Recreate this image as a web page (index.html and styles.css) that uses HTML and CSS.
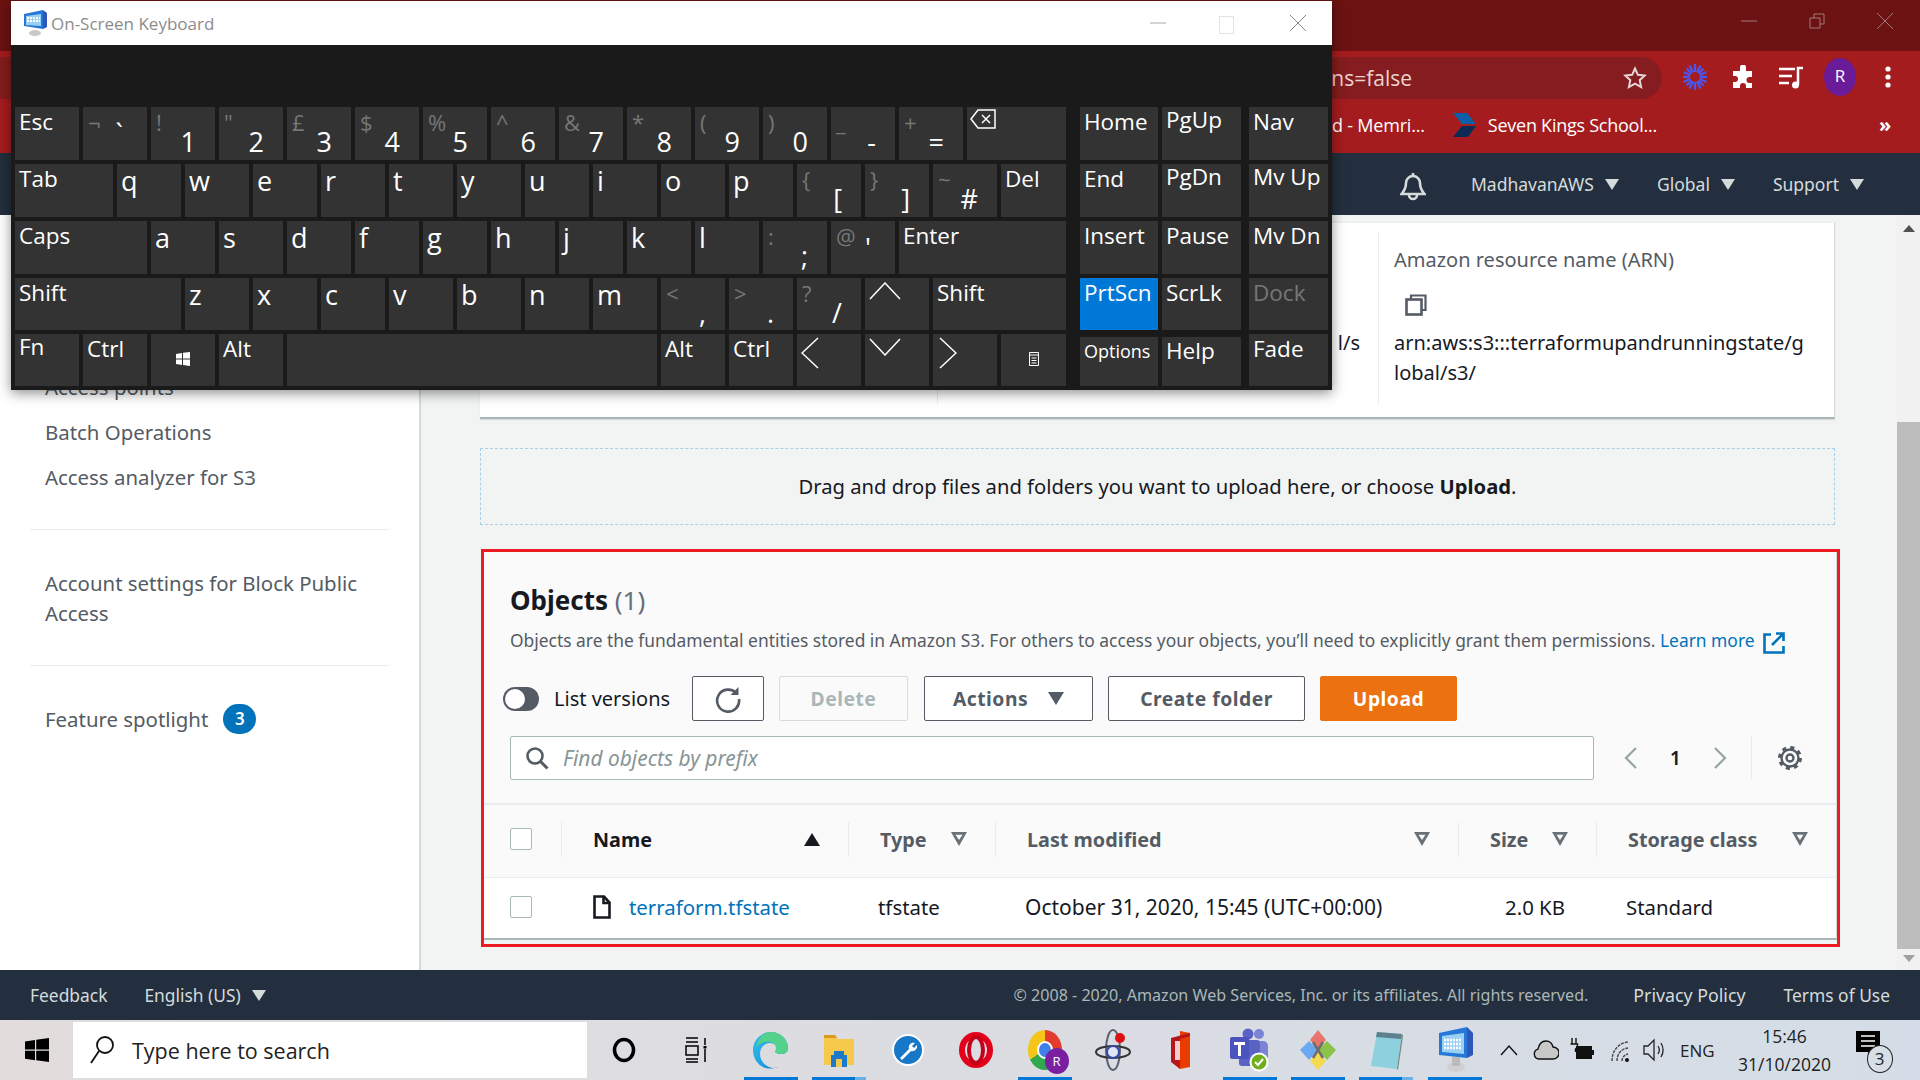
FILE: index.html
```html
<!DOCTYPE html>
<html lang="en">
<head>
<meta charset="utf-8">
<title>S3 bucket</title>
<link rel="stylesheet" href="styles.css">
</head>
<body>
<div class="screen">
  <div class="chrome-title">
    <svg class="cc" width="18" height="18" viewBox="0 0 18 18"><path d="M1 9h16" stroke="#a07a7a" fill="none"/></svg>
    <svg class="cc" width="18" height="18" viewBox="0 0 18 18"><path d="M2 6h10v10H2zM6 6V2h10v10h-4" stroke="#a07a7a" fill="none"/></svg>
    <svg class="cc" width="18" height="18" viewBox="0 0 18 18"><path d="M1 1l16 16M17 1L1 17" stroke="#a07a7a" fill="none"/></svg>
  </div>
  <div class="chrome-tool">
    <div class="omni"><span class="url">ns=false</span>
      <svg width="24" height="24" viewBox="0 0 24 24"><path d="M12 2.500l2.900 6.300 6.800.8-5 4.600 1.400 6.800-6.100-3.400-6.100 3.400 1.400-6.800-5-4.600 6.800-.8z" fill="none" stroke="#e6d5d5" stroke-width="2"/></svg>
    </div>
    <svg class="ext e1" width="26" height="28" viewBox="0 0 26 28"><g stroke="#4b55e8" stroke-width="2.400"><path d="M13 1v26M1 14h24M4.500 5.500l17 17M21.500 5.500l-17 17M7.500 2.500l11 23M18.500 2.500l-11 23M1.500 9l23 10M24.500 9l-23 10"/></g><circle cx="13" cy="14" r="5" fill="#a51c1f"/></svg>
    <svg class="ext e2" width="24" height="24" viewBox="0 0 24 24"><path d="M9 2.500a3 3 0 0 1 6 0V6h6v6h-2.500a3 3 0 0 0 0 6H21v5h-6v-2a3 3 0 0 0-6 0v2H2v-6h2a3 3 0 0 0 0-6H2V6h7z" fill="#fff"/></svg>
    <svg class="ext e3" width="26" height="24" viewBox="0 0 26 24"><path d="M1 4h16M1 11h13M1 18h10" stroke="#fff" stroke-width="2.400"/><path d="M20 20V3h5" stroke="#fff" stroke-width="2.500" fill="none"/><circle cx="17.500" cy="20" r="3.500" fill="#fff"/></svg>
    <div class="avatar">R</div>
    <svg class="ext e5" width="8" height="24" viewBox="0 0 8 24"><circle cx="4" cy="4" r="2.600" fill="#fff"/><circle cx="4" cy="12" r="2.600" fill="#fff"/><circle cx="4" cy="20" r="2.600" fill="#fff"/></svg>
  </div>
  <div class="chrome-marks">
    <span class="mark m1">d - Memri...</span>
    <svg class="sk" width="24" height="24" viewBox="0 0 24 24"><path d="M0 0h14l9 11H9z" fill="#0a5fa8"/><path d="M9 13h14l-8 11H0z" fill="#0b2b55"/></svg>
    <span class="mark m2">Seven Kings School...</span>
    <span class="more">»</span>
  </div>
  <div class="aws-nav">
    <svg class="bell" width="26" height="30" viewBox="0 0 26 30"><path d="M13 4a7 7 0 0 0-7 7c0 6-2 8-4.500 11h23C22 19 20 17 20 11a7 7 0 0 0-7-7zM13 1v3M9 23a4 4 0 0 0 8 0" fill="none" stroke="#d5dbdb" stroke-width="2.600"/></svg>
    <span class="nv n1">MadhavanAWS</span><i class="tri tri-nav"></i>
    <span class="nv n2">Global</span><i class="tri tri-nav"></i>
    <span class="nv n3">Support</span><i class="tri tri-nav"></i>
  </div>

  <div class="main">
    <nav class="side">
      <a class="side-link">Access points</a>
      <a class="side-link">Batch Operations</a>
      <a class="side-link">Access analyzer for S3</a>
      <hr class="side-rule">
      <a class="side-link wrap">Account settings for Block Public Access</a>
      <hr class="side-rule">
      <a class="side-link spot">Feature spotlight <span class="badge">3</span></a>
    </nav>
    <div class="content">
      <section class="props">
        <div class="pcol pa"></div>
        <div class="pcol pb">l/s</div>
        <div class="pcol pc">
          <div class="plabel">Amazon resource name (ARN)</div>
          <svg class="copy" width="22" height="22" viewBox="0 0 22 22"><path d="M6 5V1.500h14.500V16H17" fill="none" stroke="#545b64" stroke-width="2.200"/><rect x="1.500" y="5.500" width="15" height="15" fill="none" stroke="#545b64" stroke-width="2.600"/></svg>
          <div class="parn">arn:aws:s3:::terraformupandrunningstate/g<br>lobal/s3/</div>
        </div>
      </section>
      <div class="drop">Drag and drop files and folders you want to upload here, or choose <b>Upload</b>.</div>
      <section class="objects">
        <div class="ohead">
          <h2 class="otitle">Objects <span class="ocount">(1)</span></h2>
          <p class="odesc">Objects are the fundamental entities stored in Amazon S3. For others to access your objects, you’ll need to explicitly grant them permissions. <a class="olink">Learn more</a>
            <svg class="ext-link" width="22" height="22" viewBox="0 0 22 22"><path d="M8 2.500H1.500v18h19V14M13 1.500h7.500V9M20 2L9 13" fill="none" stroke="#0073bb" stroke-width="2.600"/></svg></p>
          <div class="actions">
            <span class="toggle"><i class="knob"></i></span>
            <span class="tlabel">List versions</span>
            <button class="btn b-ref"><svg width="28" height="28" viewBox="0 0 28 28"><path d="M22.500 8.500A11 11 0 1 0 25 14" fill="none" stroke="#545b64" stroke-width="2.600"/><path d="M24.500 2v8h-8z" fill="#545b64"/></svg></button>
            <button class="btn b-del">Delete</button>
            <button class="btn b-act">Actions <i class="tri tri-btn"></i></button>
            <button class="btn b-new">Create folder</button>
            <button class="btn b-up">Upload</button>
          </div>
          <div class="finder">
            <div class="search">
              <svg width="24" height="24" viewBox="0 0 24 24"><circle cx="10" cy="10" r="7.500" fill="none" stroke="#545b64" stroke-width="2.600"/><path d="M15.500 15.500l7 7" stroke="#545b64" stroke-width="3"/></svg>
              <span class="ph">Find objects by prefix</span>
            </div>
            <div class="pager">
              <svg width="16" height="24" viewBox="0 0 16 24"><path d="M13 2L3 12l10 10" fill="none" stroke="#95a5a6" stroke-width="2.200"/></svg>
              <span class="pnum">1</span>
              <svg width="16" height="24" viewBox="0 0 16 24"><path d="M3 2l10 10L3 22" fill="none" stroke="#95a5a6" stroke-width="2.200"/></svg>
            </div>
            <div class="gearbox">
              <svg width="26" height="26" viewBox="0 0 26 26"><circle cx="13" cy="13" r="3.500" fill="none" stroke="#545b64" stroke-width="2.400"/><circle cx="13" cy="13" r="8.500" fill="none" stroke="#545b64" stroke-width="2.400"/><circle cx="13" cy="13" r="10.500" fill="none" stroke="#545b64" stroke-width="3" stroke-dasharray="4.120 4.120"/></svg>
            </div>
          </div>
        </div>
        <div class="tbl thead">
          <div class="th th0"><i class="cb"></i></div>
          <div class="th"><div class="in dark">Name <i class="tri tri-sort"></i></div></div>
          <div class="th"><div class="in">Type <i class="fil"></i></div></div>
          <div class="th"><div class="in">Last modified <i class="fil"></i></div></div>
          <div class="th"><div class="in">Size <i class="fil"></i></div></div>
          <div class="th"><div class="in">Storage class <i class="fil"></i></div></div>
        </div>
        <div class="tbl tbody">
          <div class="td td0"><i class="cb"></i></div>
          <div class="td td-file"><svg width="18" height="24" viewBox="0 0 18 24"><path d="M1.500 1.500H11l5.500 6v15h-15zM10.500 2v6h6" fill="none" stroke="#16191f" stroke-width="2.600"/></svg><a class="olink">terraform.tfstate</a></div>
          <div class="td">tfstate</div>
          <div class="td td-date">October 31, 2020, 15:45 (UTC+00:00)</div>
          <div class="td td-size">2.0 KB</div>
          <div class="td">Standard</div>
        </div>
      </section>
    </div>
    <div class="scroll">
      <i class="sarrow up"></i>
      <div class="strack"><div class="sthumb"></div></div>
      <i class="sarrow down"></i>
    </div>
  </div>

  <footer class="foot">
    <span class="f1">Feedback</span>
    <span class="f2">English (US)</span><i class="tri tri-foot"></i>
    <span class="f3">© 2008 - 2020, Amazon Web Services, Inc. or its affiliates. All rights reserved.</span>
    <span class="f4">Privacy Policy</span>
    <span class="f5">Terms of Use</span>
  </footer>

  <div class="taskbar">
    <div class="start"><svg width="24" height="24" viewBox="0 0 24 24"><path d="M0 3.400l10-1.400v9.500H0zM11.200 1.800L24 0v11.500H11.200zM0 12.700h10v9.500L0 20.800zM11.200 12.700H24V24l-12.800-1.800z" fill="#000"/></svg></div>
    <div class="winsearch">
      <svg width="26" height="30" viewBox="0 0 26 30"><circle cx="16" cy="10" r="8" fill="none" stroke="#111" stroke-width="1.800"/><path d="M10 16L2 28" stroke="#111" stroke-width="1.800"/></svg>
      <span>Type here to search</span>
    </div>
    <div class="tslot wide"><svg width="24" height="26" viewBox="0 0 24 26"><ellipse cx="12" cy="13" rx="9.500" ry="10.500" fill="none" stroke="#000" stroke-width="3.500"/></svg></div>
    <div class="tslot wide"><svg width="24" height="26" viewBox="0 0 24 26"><path d="M1 1h12M1 5h12M1 9v9h12V9zM1 22h12M1 25h12M20 1v7M20 12v13" fill="none" stroke="#000" stroke-width="1.500"/><rect x="18.500" y="9" width="3" height="2.500" fill="#000"/></svg></div>
    <div class="tslot on first-app"><svg width="36" height="38" viewBox="0 0 36 38"><defs><linearGradient id="eg" x1="0" y1="0" x2="1" y2="1"><stop offset="0" stop-color="#35c1f1"/><stop offset=".6" stop-color="#1b9de2"/><stop offset="1" stop-color="#0c59a4"/></linearGradient></defs><path d="M18 1c9 0 17 7 17 16 0 3-2 6-7 6-4 0-6-2-6-3 4-1 2-8-5-8-6 0-10 5-10 11 0 7 6 14 15 14 1 0 2 0 3-.5C21 37 19 37.500 17 37.500 7 37.500 0 29 0 19 0 9 8 1 18 1z" fill="url(#eg)"/><path d="M18 1c9 0 17 7 17 16 0 3-2 6-7 6-3 0-5-1-6-2 2-4 1-9-5-10-5-1-10 1-14 5C6 6 11 1 18 1z" fill="#54d18a"/></svg></div>
    <div class="tslot on2"><svg width="32" height="34" viewBox="0 0 32 34"><path d="M1 2h11l3 4h16v26H1z" fill="#f6c84b"/><path d="M1 2h11l2 3H1z" fill="#d99a1f"/><path d="M11 18h10v4h3v12H8V22h3z" fill="#1d79c9"/><rect x="13" y="26" width="6" height="8" fill="#f6c84b"/></svg></div>
    <div class="tslot"><svg width="32" height="32" viewBox="0 0 32 32"><circle cx="16" cy="16" r="15" fill="#1878c8" stroke="#fff" stroke-width="2"/><path d="M8 24l9-9c-1-4 2-7 6-6l-3 3 2 2 3-3c1 4-3 7-6 6l-9 9z" fill="#fff"/></svg></div>
    <div class="tslot"><svg width="34" height="36" viewBox="0 0 34 36"><ellipse cx="17" cy="18" rx="14" ry="15" fill="none" stroke="#e2001a" stroke-width="6"/><ellipse cx="17" cy="18" rx="7" ry="13" fill="none" stroke="#c5001a" stroke-width="4"/></svg></div>
    <div class="tslot on"><div class="cr"><i class="cr-in"></i><b class="cr-r">R</b></div></div>
    <div class="tslot"><svg width="36" height="44" viewBox="0 0 36 44"><ellipse cx="18" cy="22" rx="7" ry="20" fill="none" stroke="#5b6170" stroke-width="2"/><ellipse cx="18" cy="24" rx="17" ry="6" fill="none" stroke="#333" stroke-width="2"/><circle cx="18" cy="24" r="6" fill="#dfe6f6" stroke="#3647a8" stroke-width="2"/><circle cx="25" cy="10" r="5" fill="#d11"/></svg></div>
    <div class="tslot"><svg width="30" height="44" viewBox="0 0 30 44"><path d="M14 3l10 2v34l-10 2z" fill="#eb3c00"/><path d="M24 5L5 10v24l9 7V11l10-3z" fill="#b7161c"/><path d="M9 13h5v19H9z" fill="#f5ccd0"/></svg></div>
    <div class="tslot on"><svg width="42" height="44" viewBox="0 0 42 44"><circle cx="30" cy="6" r="5" fill="#7b83d4"/><rect x="23" y="13" width="16" height="20" rx="5" fill="#7b83d4"/><circle cx="19" cy="6" r="5.500" fill="#5a62c4"/><rect x="10" y="12" width="21" height="26" rx="3" fill="#5a62c4"/><rect x="1" y="9" width="19" height="22" rx="2" fill="#4b53bc"/><path d="M5 14h11v3h-4v11H9V17H5z" fill="#fff"/><circle cx="30" cy="34" r="9.500" fill="#fff"/><circle cx="30" cy="34" r="7.500" fill="#6fae1d"/><path d="M26 34l3 3 5-6" fill="none" stroke="#fff" stroke-width="2"/></svg></div>
    <div class="tslot on"><svg width="36" height="40" viewBox="0 0 36 40"><path d="M18 0l8 10-8 9-8-9z" fill="#e8746b"/><path d="M9 11l9 9-9 10-9-10z" fill="#6aa9ef"/><path d="M27 11l9 9-9 10-9-10z" fill="#8bc34a"/><path d="M18 21l8 10-8 9-8-9z" fill="#f5d94e"/><path d="M13 12l10 16M23 12L13 28" stroke="#6d6d6d" stroke-width="2.500"/></svg></div>
    <div class="tslot on2"><svg width="36" height="42" viewBox="0 0 36 42"><path d="M9 3l25 2-5 35-26-3z" fill="#8ed1de"/><path d="M9 3l25 2-1 5-25-2z" fill="#5f7f8f"/><path d="M29 40l5-35 1 2-5 34z" fill="#6f8a7f"/></svg></div>
    <div class="tslot on"><svg width="36" height="46" viewBox="0 0 36 46"><path d="M30 0l6 6v22l-6 3z" fill="#2d57b8"/><path d="M2 6l28-6v31L2 28z" fill="#2678d8"/><path d="M5 9l22-3v21L5 25z" fill="#9bd0f5"/><path d="M7 13h18M7 17h18M7 21h18" stroke="#fff" stroke-width="2.500" stroke-dasharray="2 1"/><ellipse cx="19" cy="40" rx="9" ry="5" fill="#cfcfcf"/><rect x="15" y="30" width="8" height="9" fill="#bbb"/></svg></div>
    <div class="tray">
      <svg class="t-up" width="18" height="12" viewBox="0 0 18 12"><path d="M1 11l8-9 8 9" fill="none" stroke="#111" stroke-width="1.400"/></svg>
      <svg class="t-cl" width="26" height="22" viewBox="0 0 26 22"><path d="M6 20a5 5 0 0 1-1-9.800C6 5 9 2 13 2c3 0 6 2 7 6a6 6 0 0 1 0 12z" fill="#c8c8c8" stroke="#111" stroke-width="1.400"/></svg>
      <svg class="t-ba" width="26" height="26" viewBox="0 0 26 26"><path d="M3 1v6M7 1v6M1.500 7h7v3l-2 2v3" stroke="#111" stroke-width="1.400" fill="none"/><rect x="7" y="9" width="16" height="13" fill="#111"/><rect x="23" y="13" width="2" height="5" fill="#111"/></svg>
      <svg class="t-wi" width="20" height="26" viewBox="0 0 20 26"><path d="M2 24C2 13 9 6 18 5M7 24c0-7 4-12 11-13M12 24c0-3 2-6 6-7" fill="none" stroke="#444" stroke-width="1.400" stroke-dasharray="3 1"/><circle cx="17" cy="23" r="2" fill="#111"/></svg>
      <svg class="t-sp" width="22" height="26" viewBox="0 0 22 26"><path d="M1 9h4l6-6v20l-6-6H1zM15 9c2 3 2 5 0 8M18 6c3 5 3 9 0 14" fill="none" stroke="#222" stroke-width="1.300"/></svg>
      <span class="eng">ENG</span>
      <div class="clock"><span>15:46</span><span>31/10/2020</span></div>
      <div class="notif"><svg width="26" height="32" viewBox="0 0 26 32"><path d="M1 1h24v21h-8l-4 7v-7H1z" fill="#000"/><path d="M6 6h14M6 11h14M6 16h14" stroke="#fff" stroke-width="1.600"/></svg><span class="nbadge">3</span></div>
    </div>
  </div>

  <div class="osk">
    <div class="osk-title">
      <svg width="24" height="26" viewBox="0 0 24 26"><path d="M20 0l4 3v14l-4 2z" fill="#2d57b8"/><path d="M1 4l19-4v19L1 16z" fill="#2678d8"/><path d="M3 6l15-2v12L3 15z" fill="#9bd0f5"/><path d="M4 8h13M4 11h13" stroke="#fff" stroke-width="2" stroke-dasharray="2 1"/><ellipse cx="12" cy="23" rx="6" ry="3" fill="#c9c9c9"/></svg>
      <span class="osk-name">On-Screen Keyboard</span>
      <svg class="wc wc1" width="16" height="16" viewBox="0 0 16 16"><path d="M0 8h16" stroke="#aaa"/></svg>
      <svg class="wc wc2" width="16" height="18" viewBox="0 0 16 18"><rect x=".5" y=".5" width="14" height="17" fill="none" stroke="#e3e3e3"/></svg>
      <svg class="wc wc3" width="16" height="16" viewBox="0 0 16 16"><path d="M0 0l16 16M16 0L0 16" stroke="#888"/></svg>
    </div>
    <div class="osk-body">
      <div class="row r53">
        <div class="key">Esc</div>
        <div class="key"><span class="s">¬</span><span class="m lo">`</span></div>
        <div class="key"><span class="s">!</span><span class="m">1</span></div>
        <div class="key"><span class="s">"</span><span class="m">2</span></div>
        <div class="key"><span class="s">£</span><span class="m">3</span></div>
        <div class="key"><span class="s">$</span><span class="m">4</span></div>
        <div class="key"><span class="s">%</span><span class="m">5</span></div>
        <div class="key"><span class="s">^</span><span class="m">6</span></div>
        <div class="key"><span class="s">&amp;</span><span class="m">7</span></div>
        <div class="key"><span class="s">*</span><span class="m">8</span></div>
        <div class="key"><span class="s">(</span><span class="m">9</span></div>
        <div class="key"><span class="s">)</span><span class="m">0</span></div>
        <div class="key"><span class="s">_</span><span class="m">-</span></div>
        <div class="key"><span class="s">+</span><span class="m">=</span></div>
        <div class="key w99"><svg class="bs" width="26" height="20" viewBox="0 0 26 20"><path d="M8 1h17v18H8L1 10zM12 6l8 8M20 6l-8 8" fill="none" stroke="#fff" stroke-width="1.500"/></svg></div>
        <div class="key w78 block2">Home</div><div class="key w79 hi">PgUp</div><div class="key w79 gap8">Nav</div>
      </div>
      <div class="row r53">
        <div class="key w98">Tab</div>
        <div class="key let">q</div><div class="key let">w</div><div class="key let">e</div><div class="key let">r</div><div class="key let">t</div><div class="key let">y</div><div class="key let">u</div><div class="key let">i</div><div class="key let">o</div><div class="key let">p</div>
        <div class="key"><span class="s">{</span><span class="m">[</span></div>
        <div class="key"><span class="s">}</span><span class="m">]</span></div>
        <div class="key"><span class="s">~</span><span class="m">#</span></div>
        <div class="key w65">Del</div>
        <div class="key w78 block2">End</div><div class="key w79 hi">PgDn</div><div class="key w79 gap8 hi">Mv Up</div>
      </div>
      <div class="row r53">
        <div class="key w132">Caps</div>
        <div class="key let">a</div><div class="key let">s</div><div class="key let">d</div><div class="key let">f</div><div class="key let">g</div><div class="key let">h</div><div class="key let">j</div><div class="key let">k</div><div class="key let">l</div>
        <div class="key"><span class="s">:</span><span class="m">;</span></div>
        <div class="key"><span class="s">@</span><span class="m lo">'</span></div>
        <div class="key w167">Enter</div>
        <div class="key w78 block2">Insert</div><div class="key w79">Pause</div><div class="key w79 gap8">Mv Dn</div>
      </div>
      <div class="row r52">
        <div class="key w166">Shift</div>
        <div class="key let">z</div><div class="key let">x</div><div class="key let">c</div><div class="key let">v</div><div class="key let">b</div><div class="key let">n</div><div class="key let">m</div>
        <div class="key"><span class="s">&lt;</span><span class="m">,</span></div>
        <div class="key"><span class="s">&gt;</span><span class="m">.</span></div>
        <div class="key"><span class="s">?</span><span class="m">/</span></div>
        <div class="key"><svg class="ar" width="32" height="18" viewBox="0 0 32 18"><path d="M1 17L16 1l15 16" fill="none" stroke="#fff" stroke-width="1.500"/></svg></div>
        <div class="key w133">Shift</div>
        <div class="key w78 block2 blue">PrtScn</div><div class="key w79">ScrLk</div><div class="key w79 gap8 off">Dock</div>
      </div>
      <div class="row r52">
        <div class="key hi">Fn</div><div class="key">Ctrl</div>
        <div class="key ctr"><svg width="14" height="14" viewBox="0 0 14 14"><path d="M0 2l6-1v5.500H0zM7 .8L14 0v6.500H7zM0 7.500h6V13l-6-1zM7 7.500h7V14l-7-1z" fill="#fff"/></svg></div>
        <div class="key">Alt</div>
        <div class="key w370"></div>
        <div class="key">Alt</div><div class="key">Ctrl</div>
        <div class="key"><svg class="ar al" width="18" height="32" viewBox="0 0 18 32"><path d="M17 1L1 16l16 15" fill="none" stroke="#fff" stroke-width="1.500"/></svg></div>
        <div class="key"><svg class="ar" width="32" height="18" viewBox="0 0 32 18"><path d="M1 1l15 16L31 1" fill="none" stroke="#fff" stroke-width="1.500"/></svg></div>
        <div class="key"><svg class="ar ar-r" width="18" height="32" viewBox="0 0 18 32"><path d="M1 1l16 15L1 31" fill="none" stroke="#fff" stroke-width="1.500"/></svg></div>
        <div class="key w65 ctr"><svg width="10" height="14" viewBox="0 0 10 14"><path d="M.5.500h9v13h-9zM.5 3h9M2.500 6h5M2.500 8.500h5M2.500 11h5" fill="none" stroke="#fff"/></svg></div>
        <div class="key w78 block2 low opt">Options</div><div class="key w79 low help">Help</div><div class="key w79 gap8">Fade</div>
      </div>
    </div>
  </div>
</div>
</body>
</html>
```

FILE: styles.css
```css
* { box-sizing: border-box; }
html, body { margin: 0; height: 100%; }
body { font-family: "Noto Sans", "Open Sans", sans-serif; overflow: hidden; }
.screen { position: relative; width: 1920px; height: 1080px; display: flex; flex-direction: column; background: #f2f3f3; color: #16191f; }
i { font-style: normal; display: block; }

/* browser chrome */
.chrome-title { height: 51px; background: #6c1212; display: flex; justify-content: flex-end; align-items: center; gap: 50px; padding: 0 26px 10px 0; }
.chrome-tool { height: 54px; background: #a51c1f; display: flex; align-items: center; }
.omni { width: 1662px; height: 42px; background: #851c1f; border-radius: 0 21px 21px 0; display: flex; align-items: center; justify-content: flex-end; padding-right: 15px; font-family: "Open Sans", sans-serif; font-size: 21px; color: #ecd3d3; }
.url { margin-right: 211px; }
.ext { flex: none; margin-top: -2px; }
.e1 { margin-left: 20px; }
.e2 { margin-left: 23px; }
.e3 { margin-left: 23px; }
.e5 { margin-left: 28px; }
.avatar { width: 32px; height: 38px; margin: -2px 0 0 20px; border-radius: 50%; background: #6a1b9a; color: #fff; text-align: center; font: 17px/36px "Open Sans", sans-serif; }
.chrome-marks { height: 48px; padding-bottom: 8px; background: #a51c1f; display: flex; align-items: center; font-family: "Open Sans", sans-serif; font-size: 18px; color: #fff; }
.m1 { margin-left: 1332px; letter-spacing: -.2px; }
.sk { margin-left: 28px; }
.m2 { margin-left: 11px; letter-spacing: -.25px; }
.more { margin-left: 222px; font-size: 20px; line-height: 20px; font-weight: 700; }
.aws-nav { height: 62px; background: #232f3e; display: flex; align-items: center; color: #d5dbdb; font-size: 17.500px; }
.bell { margin: 5px 0 0 1400px; }
.nv { flex: none; }
.n1 { margin-left: 45px; }
.n2 { margin-left: 38px; }
.n3 { margin-left: 38px; }
.tri { width: 0; height: 0; border-style: solid; border-color: transparent; flex: none; }
.tri-nav { margin-left: 11px; border-width: 11px 7px 0; border-top-color: #d5dbdb; }

/* main */
.main { flex: 1; min-height: 0; display: flex; overflow: hidden; }
.side { width: 421px; flex: none; background: #fff; border-right: 2px solid #d5dbdb; padding: 157px 30px 0; color: #545b64; }
.side-link { display: block; padding-left: 15px; font-size: 20.400px; line-height: 30px; margin-bottom: 15px; white-space: nowrap; }
.wrap { white-space: normal; margin: 0; padding-right: 10px; }
.side-rule { border: 0; border-top: 1px solid #eaeded; margin: 37px 0 38px; height: 0; }
.spot { display: flex; align-items: center; gap: 15px; }
.badge { width: 33px; height: 30px; border-radius: 15px; background: #0073bb; color: #fff; font-size: 17px; text-align: center; font-weight: 600; line-height: 30px; }
.content { width: 1476px; flex: none; padding: 7px 62px 0 59px; overflow: visible; }

.props { height: 197px; background: #fff; border-bottom: 2px solid #aab7b8; border-right: 1px solid #d5dbdb; border-top: 1px solid #eaeded; display: flex; box-shadow: 0 1px 1px rgba(0,22,43,.1); font-size: 20px; }
.pcol { margin: 8px 0 13px; }
.pa { width: 457px; }
.pb { width: 441px; border-left: 1px solid #eaeded; text-align: right; padding: 97px 18px 0 0; color: #16191f; line-height: 30px; }
.pc { flex: 1; border-left: 1px solid #eaeded; padding: 14px 10px 0 15px; color: #16191f; }
.plabel { color: #545b64; line-height: 30px; }
.copy { display: block; margin: 19px 0 0 11px; }
.parn { margin-top: 12px; line-height: 30px; }
.drop { margin-top: 29px; height: 77px; border: 1px dashed #a8cfe8; font-size: 20.200px; text-align: center; line-height: 75px; color: #16191f; }
.drop b { font-weight: 700; }

/* objects */
.objects { margin: 24px -5px 0 1px; height: 398px; border: 3px solid #ed1c24; background: #f2f3f3; }
.ohead { background: #fafafa; height: 251px; padding: 33px 0 0 26px; border-right: 1px solid #d5dbdb; }
.otitle { margin: 0; font-size: 26px; line-height: 30px; font-weight: 700; color: #16191f; }
.ocount { font-weight: 400; color: #687078; }
.odesc { margin: 13px 0 0; font-size: 17.400px; line-height: 24px; color: #545b64; white-space: nowrap; }
.olink { color: #0073bb; }
.ext-link { vertical-align: -7px; margin-left: 4px; }
.actions { display: flex; align-items: center; margin: 22px 0 0 -7px; height: 45px; }
.toggle { width: 36px; height: 24px; background: #545b64; border-radius: 12px; padding: 2px; }
.knob { width: 20px; height: 20px; background: #fff; border-radius: 50%; }
.tlabel { margin-left: 15px; width: 138px; font-size: 20px; color: #16191f; white-space: nowrap; }
.btn { height: 45px; background: #fff; border: 1px solid #545b64; border-radius: 2px; font: 700 19.300px "Noto Sans", sans-serif; color: #545b64; display: flex; align-items: center; justify-content: center; padding: 0; letter-spacing: .5px; }
.b-ref { width: 72px; }
.b-del { width: 129px; margin-left: 15px; border-color: #d5dbdb; background: #fafafa; color: #aab7b8; }
.b-act { width: 169px; margin-left: 16px; gap: 20px; }
.tri-btn { border-width: 13px 8px 0; border-top-color: #545b64; }
.b-new { width: 197px; margin-left: 15px; }
.b-up { width: 137px; margin-left: 15px; background: #ec7211; border-color: #ec7211; color: #fff; }
.finder { display: flex; align-items: center; margin-top: 15px; height: 44px; }
.search { width: 1084px; height: 44px; background: #fff; border: 1px solid #aab7b8; border-radius: 2px; display: flex; align-items: center; padding-left: 14px; }
.ph { margin-left: 14px; font-style: italic; font-size: 20.900px; color: #879596; }
.pager { width: 157px; display: flex; align-items: center; justify-content: space-between; padding: 0 23px 0 29px; }
.pnum { font-size: 19px; font-weight: 600; color: #16191f; }
.gearbox { width: 76px; height: 44px; border-left: 1px solid #eaeded; display: flex; align-items: center; justify-content: center; }
.tbl { display: grid; grid-template-columns: 77px 287px 147px 463px 138px 240px; border-right: 1px solid #d5dbdb; }
.thead { height: 74px; padding-bottom: 4px; background: #fafafa; border-top: 2px solid #eaeded; font-size: 19.800px; font-weight: 700; color: #545b64; }
.th { display: flex; align-items: center; }
.th0 { padding-left: 26px; }
.in { flex: 1; height: 35px; border-left: 1px solid #eaeded; display: flex; align-items: center; justify-content: space-between; padding: 0 28px 0 31px; white-space: nowrap; }
.dark { color: #16191f; }
.tri-sort { border-width: 0 8px 13px; border-bottom-color: #16191f; }
.fil { width: 16px; height: 14px; background: #687078; clip-path: polygon(0 0, 100% 0, 50% 100%, 0 0, 28% 20%, 50% 58%, 72% 20%, 28% 20%); }
.cb { width: 22px; height: 22px; background: #fff; border: 1px solid #aab7b8; border-radius: 2px; }
.tbody { height: 63px; padding-bottom: 2px; background: #fff; border-top: 1px solid #eaeded; border-bottom: 2px solid #aab7b8; font-size: 20.400px; color: #16191f; align-items: center; }
.td { padding-left: 30px; white-space: nowrap; }
.td0 { padding-left: 26px; }
.td-file { padding-left: 32px; display: flex; align-items: center; gap: 18px; }
.td-date { font-size: 21px; }
.td-size { text-align: right; padding: 0 31px 0 0; }

/* scrollbar */
.scroll { width: 23px; flex: none; background: #f1f1f1; display: flex; flex-direction: column; align-items: center; }
.sarrow { width: 0; height: 0; border: 6px solid transparent; border-top-width: 0; border-bottom-width: 0; flex: none; }
.up { border-bottom: 7px solid #505050; margin-top: 10px; }
.down { border-top: 7px solid #a0a0a0; margin-bottom: 8px; }
.strack { flex: 1; width: 100%; padding: 190px 0 6px; }
.sthumb { height: 100%; background: #bdbdbd; }

/* aws footer */
.foot { height: 50px; background: #232f3e; display: flex; align-items: center; color: #d5dbdb; font-size: 17.400px; white-space: nowrap; }
.f1 { margin-left: 30px; }
.f2 { margin-left: 37px; }
.tri-foot { margin-left: 11px; border-width: 11px 7px 0; border-top-color: #d5dbdb; }
.f3 { margin-left: auto; font-size: 16.100px; color: #aab7b8; }
.f4 { margin-left: 45px; font-size: 17.800px; }
.f5 { margin-left: 38px; margin-right: 30px; }

/* windows taskbar */
.taskbar { height: 60px; background: linear-gradient(90deg, #e2dcdc, #d4dde7); display: flex; align-items: center; }
.start { width: 73px; display: flex; justify-content: center; }
.winsearch { width: 514px; height: 56px; background: #fff; display: flex; align-items: center; padding-left: 16px; gap: 17px; font-family: "Open Sans", sans-serif; font-size: 21.500px; color: #222; }
.tslot { width: 54px; height: 60px; margin: 0 7.200px; flex: none; display: flex; align-items: center; justify-content: center; border-bottom: 3px solid transparent; padding-top: 2px; }
.tslot.wide { width: 58px; margin: 0 7.500px; }
.tslot.first-app { margin-left: 11px; }
.tslot.on { border-bottom-color: #0078d7; }
.tslot.on2 { border-image: linear-gradient(90deg, #0078d7 78%, #6cb0e8 78%) 1; }
.cr { width: 34px; height: 40px; border-radius: 50%; background: conic-gradient(#e33b2e 0 33%, #2fa84f 33% 66%, #f5c518 66% 100%); display: flex; align-items: center; justify-content: center; position: relative; }
.cr-in { width: 16px; height: 18px; border-radius: 50%; background: #3f7fe8; border: 2px solid #fff; }
.cr-r { position: absolute; right: -7px; bottom: -4px; width: 24px; height: 26px; border-radius: 50%; background: #7b1fa2; color: #fff; font: 13px/26px "Open Sans", sans-serif; text-align: center; }
.tray { display: flex; align-items: center; flex: 1; padding-left: 11px; }
.t-cl { margin-left: 15px; }
.t-ba { margin-left: 10px; }
.t-wi { margin-left: 15px; }
.t-sp { margin-left: 13px; }
.eng { margin-left: 15px; font: 17px "Open Sans", sans-serif; color: #222; }
.clock { width: 112px; margin-left: 14px; display: flex; flex-direction: column; align-items: center; gap: 8px; font: 17.500px/20px "Open Sans", sans-serif; color: #222; }
.notif { margin-left: 14px; position: relative; height: 40px; }
.nbadge { position: absolute; left: 12px; top: 15px; width: 26px; height: 28px; border-radius: 50%; background: #d8dee6; border: 1px solid #222; font: 17px/26px "Open Sans", sans-serif; text-align: center; color: #222; }

/* on-screen keyboard window */
.osk { position: absolute; left: 11px; top: 1px; width: 1321px; height: 389px; background: #1a1a1a; box-shadow: 0 3px 12px rgba(0,0,0,.45); font-family: "Open Sans", sans-serif; }
.osk-title { height: 44px; background: #fff; display: flex; align-items: center; padding-left: 12px; color: #8c8c8c; font-size: 17px; }
.osk-name { margin-left: 4px; }
.wc { position: absolute; }
.wc1 { left: 1139px; top: 14px; }
.wc2 { left: 1208px; top: 15px; }
.wc3 { left: 1279px; top: 14px; }
.osk-body { padding: 62px 4px 0; display: flex; flex-direction: column; gap: 4px; }
.row { display: flex; gap: 4px; }
.r53 { height: 53px; }
.r52 { height: 52px; }
.key { width: 64px; background: #333; color: #fff; font-size: 22.500px; line-height: 30px; padding-left: 4px; flex: none; white-space: nowrap; }
.hi { line-height: 26px; }
.let { font-size: 27px; line-height: 34px; }
.s { display: block; height: 21px; line-height: 30px; font-size: 22px; color: #777; padding-left: 1px; }
.m { display: block; text-align: right; padding-right: 19px; font-size: 27px; line-height: 27px; }
.lo { line-height: 12px; padding-right: 24px; }
.w65 { width: 65px; } .w78 { width: 78px; } .w79 { width: 79px; } .w98 { width: 98px; } .w99 { width: 99px; }
.w132 { width: 132px; } .w133 { width: 133px; } .w166 { width: 166px; } .w167 { width: 167px; } .w370 { width: 370px; }
.block2 { margin-left: 10px; }
.gap8 { margin-left: 4px; }
.blue { background: #0078d7; }
.off { color: #777; }
.low { height: 49px; align-self: flex-end; }
.opt { font-size: 18px; line-height: 28px; }
.help { line-height: 28px; }
.bs { display: block; margin: 2px 0 0 -1px; }
.ar { display: block; margin-top: 4px; }
.al { margin-top: 3px; }
.ar-r { margin-left: 2px; margin-top: 3px; }
.ctr { display: flex; align-items: flex-end; justify-content: center; padding: 0 0 20px; }
```
